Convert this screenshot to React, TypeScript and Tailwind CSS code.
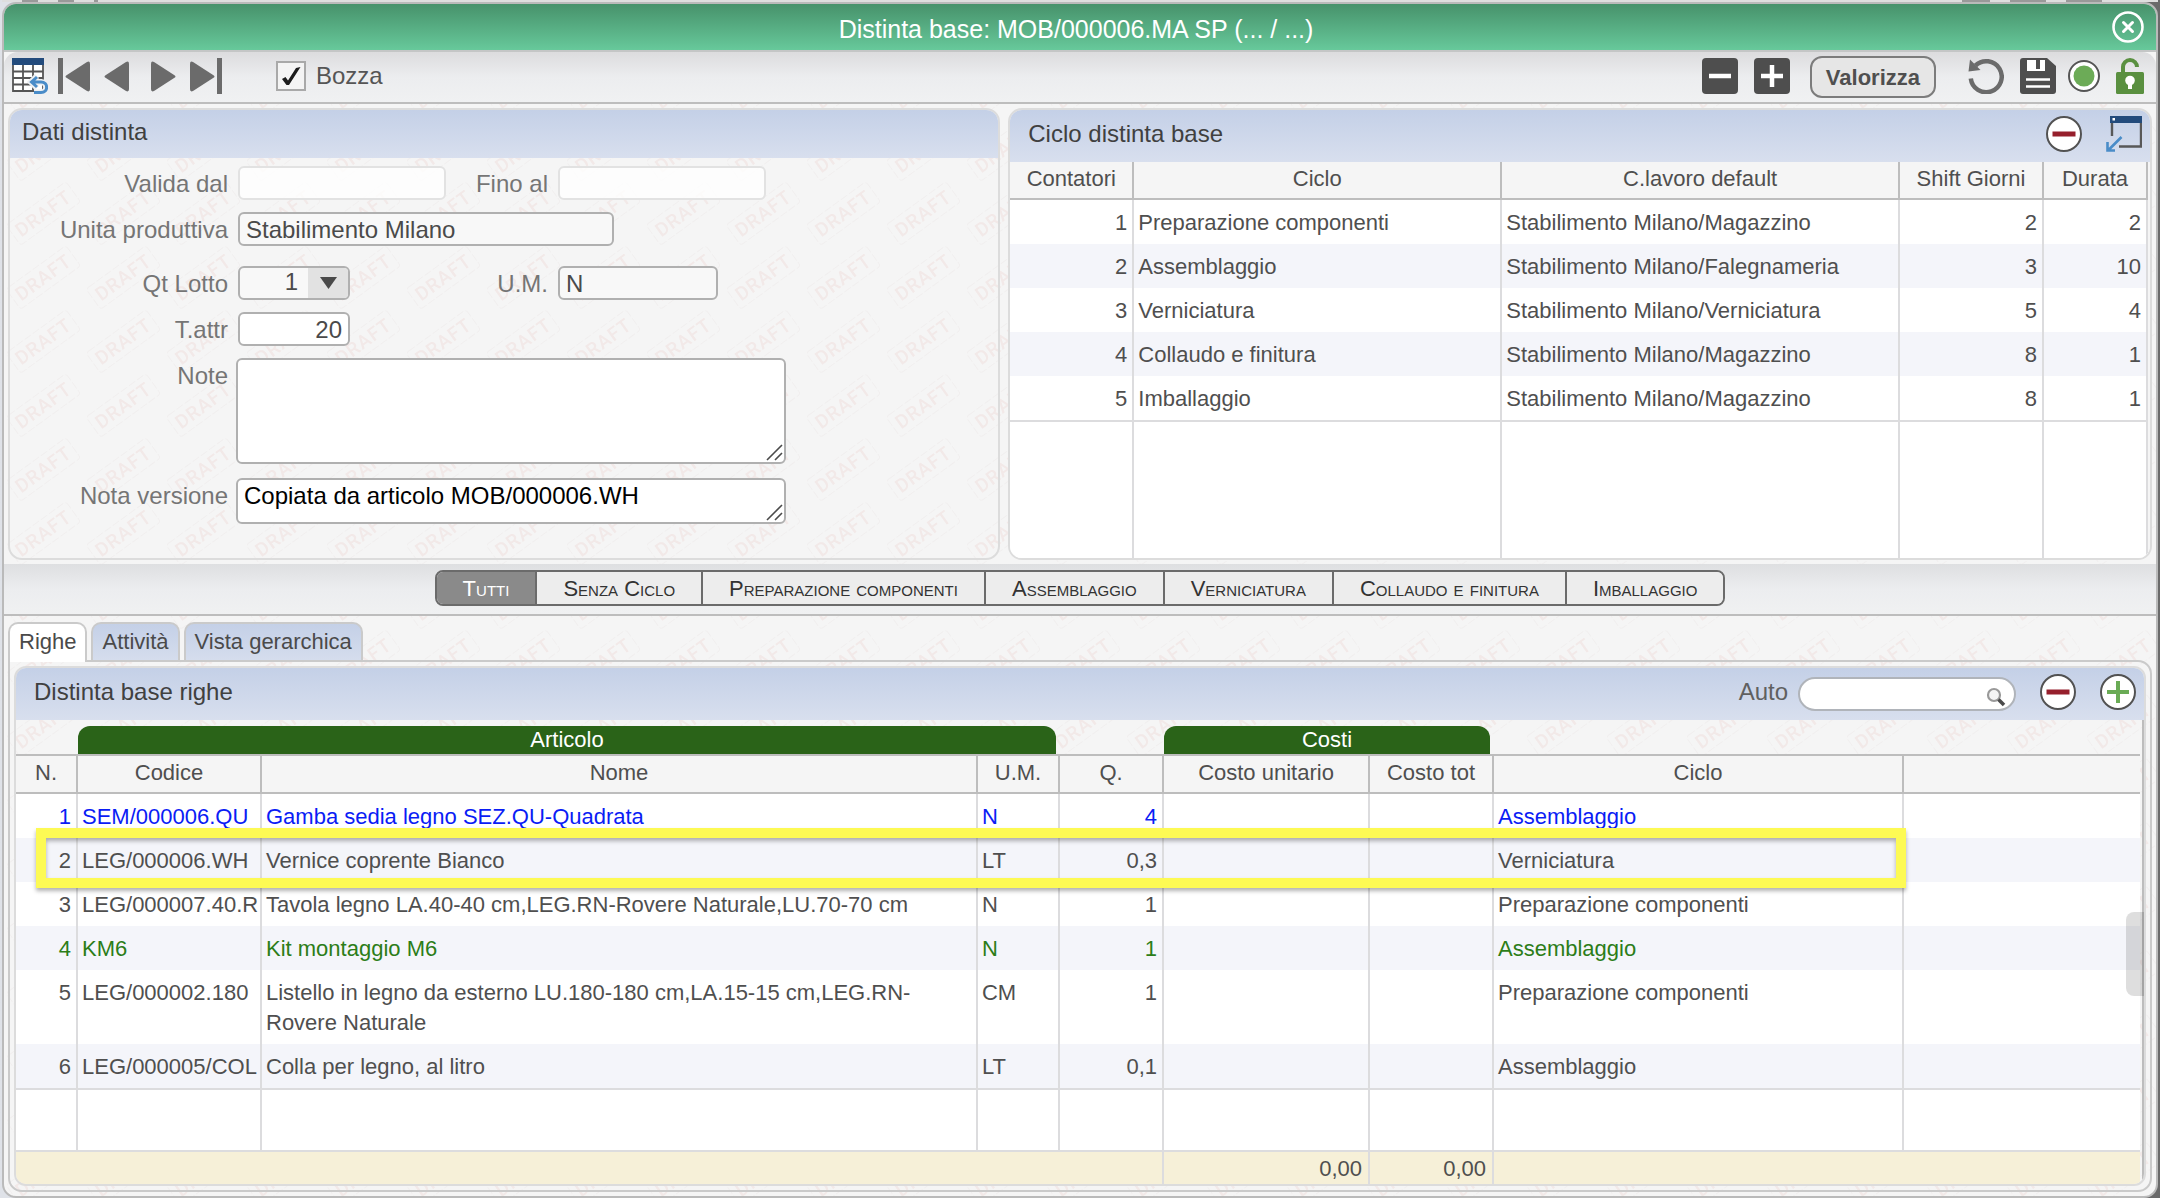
import React, { useState } from "react";

type Tone = "blue" | "green" | "plain";

const toneClass: Record<Tone, string> = {
  blue: "text-[#0a1cf5]",
  green: "text-[#2c7d18]",
  plain: "text-[#4f4f4f]",
};

const cicli = [
  { n: 1, ciclo: "Preparazione componenti", lavoro: "Stabilimento Milano/Magazzino", shift: 2, durata: 2 },
  { n: 2, ciclo: "Assemblaggio", lavoro: "Stabilimento Milano/Falegnameria", shift: 3, durata: 10 },
  { n: 3, ciclo: "Verniciatura", lavoro: "Stabilimento Milano/Verniciatura", shift: 5, durata: 4 },
  { n: 4, ciclo: "Collaudo e finitura", lavoro: "Stabilimento Milano/Magazzino", shift: 8, durata: 1 },
  { n: 5, ciclo: "Imballaggio", lavoro: "Stabilimento Milano/Magazzino", shift: 8, durata: 1 },
];

const righe: { n: number; codice: string; nome: string; um: string; q: string; ciclo: string; tone: Tone; marked?: boolean }[] = [
  { n: 1, codice: "SEM/000006.QU", nome: "Gamba sedia legno SEZ.QU-Quadrata", um: "N", q: "4", ciclo: "Assemblaggio", tone: "blue" },
  { n: 2, codice: "LEG/000006.WH", nome: "Vernice coprente Bianco", um: "LT", q: "0,3", ciclo: "Verniciatura", tone: "plain", marked: true },
  { n: 3, codice: "LEG/000007.40.R", nome: "Tavola legno LA.40-40 cm,LEG.RN-Rovere Naturale,LU.70-70 cm", um: "N", q: "1", ciclo: "Preparazione componenti", tone: "plain" },
  { n: 4, codice: "KM6", nome: "Kit montaggio M6", um: "N", q: "1", ciclo: "Assemblaggio", tone: "green" },
  { n: 5, codice: "LEG/000002.180", nome: "Listello in legno da esterno LU.180-180 cm,LA.15-15 cm,LEG.RN-Rovere Naturale", um: "CM", q: "1", ciclo: "Preparazione componenti", tone: "plain" },
  { n: 6, codice: "LEG/000005/COL", nome: "Colla per legno, al litro", um: "LT", q: "0,1", ciclo: "Assemblaggio", tone: "plain" },
];

const filtri = ["Tutti", "Senza Ciclo", "Preparazione componenti", "Assemblaggio", "Verniciatura", "Collaudo e finitura", "Imballaggio"];
const schede = ["Righe", "Attività", "Vista gerarchica"];

function DraftPattern() {
  return (
    <svg className="pointer-events-none absolute inset-0 h-full w-full" aria-hidden="true">
      <defs>
        <pattern id="draft" x="-1" y="49" width="80" height="64" patternUnits="userSpaceOnUse">
          <g transform="rotate(-36 40 32)">
            <rect x="3" y="20" width="74" height="25" rx="3" fill="none" stroke="#f1efef" strokeWidth="1" strokeDasharray="8 2" />
            <text x="40" y="39" textAnchor="middle" fontFamily="Roboto, sans-serif" fontWeight="500" fontSize="19" letterSpacing="1" fill="#f2e9e8">DRAFT</text>
          </g>
        </pattern>
      </defs>
      <rect width="100%" height="100%" fill="url(#draft)" />
    </svg>
  );
}

function IconButton({ label, className = "", children }: { label: string; className?: string; children: React.ReactNode }) {
  return (
    <button type="button" aria-label={label} className={"block shrink-0 " + className}>
      {children}
    </button>
  );
}

function GridIcon() {
  return (
    <svg width="36" height="36" viewBox="0 0 36 36">
      <rect x="1" y="2" width="30" height="31" fill="#fff" />
      <path d="M1 6V33H31V6M1 13.5H31M1 20H31M1 26.500H20M11 6V33M21 6V33" fill="none" stroke="#555" strokeWidth="1.800" />
      <rect x="0" y="0" width="32" height="7" fill="#234b7c" />
      <path d="M25 18L19 24L25 30M20 24H29C36 24 36 34.500 29 34.500H22" fill="none" stroke="#eef0f2" strokeWidth="6" />
      <path d="M25 19L19.500 24L25 29M20 24H29C36.500 24 36.500 34.500 29 34.500H22" fill="none" stroke="#4a8cc8" strokeWidth="3" />
    </svg>
  );
}

function PrevTriangle() {
  return <path d="M1.500 14.200L22 1Q25 -0.500 25 3V28Q25 31.500 22 30L1.500 16.800Q-0.500 15.500 1.500 14.200Z" fill="#6b6b6b" />;
}

function MinusCircle() {
  return (
    <svg width="36" height="36" viewBox="0 0 36 36">
      <circle cx="18" cy="18" r="17" fill="#fff" stroke="#525252" strokeWidth="2" />
      <rect x="6.500" y="15.500" width="23" height="5" fill="#961f2c" />
    </svg>
  );
}

function PlusCircle() {
  return (
    <svg width="36" height="36" viewBox="0 0 36 36">
      <circle cx="18" cy="18" r="17" fill="#fff" stroke="#525252" strokeWidth="2" />
      <path d="M18 7V29M7 18H29" stroke="#6aab55" strokeWidth="4" />
    </svg>
  );
}

function PanelHeader({ title, tall, children }: { title: string; tall?: boolean; children?: React.ReactNode }) {
  return (
    <div className={"flex items-center " + (tall ? "h-13" : "h-12")}>
      <h2 className="flex-1 pb-1 text-[24px] leading-[34px] text-[#404040]">{title}</h2>
      {children}
    </div>
  );
}

function Label({ htmlFor, wide, children }: { htmlFor: string; wide?: string; children: React.ReactNode }) {
  return (
    <label htmlFor={htmlFor} className={"h-[34px] shrink-0 pt-px text-right leading-[34px] text-[#757575] " + (wide ?? "w-[218px]")}>
      {children}
    </label>
  );
}

function Grip() {
  return (
    <svg width="18" height="18" viewBox="0 0 18 18" className="pointer-events-none absolute right-0.5 bottom-0.5">
      <path d="M1 16L16 1M9 16L16 9" stroke="#4a4a4a" strokeWidth="1.600" />
    </svg>
  );
}

const field = "block h-[34px] w-full rounded-md border-2 px-1.5 pt-px outline-none";

function DatiDistinta() {
  return (
    <section className="min-w-0 flex-[992] overflow-hidden rounded-[14px] border-2 border-[#dcdcdc]">
      <div className="bg-linear-to-b from-[#c4d0e7] to-[#d8dfee] pl-3">
        <PanelHeader title="Dati distinta" />
      </div>
      <form className="flex flex-col gap-3 pt-2 pb-[34px] text-[24px] text-[#4a4a4a]">
        <div className="flex gap-2.5">
          <Label htmlFor="valida">Valida dal</Label>
          <div className="w-[208px]"><input id="valida" className={field + " border-[#e2e2e2] bg-white/80"} /></div>
          <Label htmlFor="fino" wide="w-[92px]">Fino al</Label>
          <div className="w-[208px]"><input id="fino" className={field + " border-[#e2e2e2] bg-white/80"} /></div>
        </div>
        <div className="flex gap-2.5 pb-2">
          <Label htmlFor="unita">Unita produttiva</Label>
          <div className="w-[376px]"><input id="unita" readOnly defaultValue="Stabilimento Milano" className={field + " border-[#b0b0b0] bg-[#f8f8f8]"} /></div>
        </div>
        <div className="flex gap-2.5">
          <Label htmlFor="lotto">Qt Lotto</Label>
          <div className="relative w-28">
            <select id="lotto" className="block h-[34px] w-full appearance-none rounded-md border-2 border-[#b0b0b0] bg-[#f8f8f8] pr-[50px] pb-0.5 leading-[28px] outline-none [text-align-last:right]">
              <option>1</option>
            </select>
            <span className="pointer-events-none absolute top-0.5 right-0.5 bottom-0.5 flex w-10 items-center justify-center rounded-r bg-[#e2e2e2]">
              <svg width="17" height="12" viewBox="0 0 17 12"><path d="M0 0H17L8.500 12Z" fill="#4a4a4a" /></svg>
            </span>
          </div>
          <Label htmlFor="um" wide="w-[188px]">U.M.</Label>
          <div className="w-40"><input id="um" readOnly defaultValue="N" className={field + " border-[#b0b0b0] bg-[#f8f8f8]"} /></div>
        </div>
        <div className="flex gap-2.5">
          <Label htmlFor="tattr">T.attr</Label>
          <div className="w-28"><input id="tattr" defaultValue="20" className={field + " border-[#b0b0b0] bg-white text-right"} /></div>
        </div>
        <div className="flex gap-2">
          <Label htmlFor="note">Note</Label>
          <div className="relative w-[550px]">
            <textarea id="note" className="block h-[106px] w-full resize-none rounded-md border-2 border-[#b0b0b0] bg-white px-1.5 outline-none" />
            <Grip />
          </div>
        </div>
        <div className="flex gap-2 pt-0.5">
          <Label htmlFor="nota">Nota versione</Label>
          <div className="relative w-[550px]">
            <textarea id="nota" defaultValue="Copiata da articolo MOB/000006.WH" className="block h-[46px] w-full resize-none overflow-hidden rounded-md border-2 border-[#b0b0b0] bg-white px-1.5 leading-[32px] text-black outline-none" />
            <Grip />
          </div>
        </div>
      </form>
    </section>
  );
}

const th = "border-[#bdbdbd] border-b-2 bg-[#f5f5f5] px-1 pt-0.5 pb-1 text-center font-normal text-[#4f4f4f]";
const td = "border-[#dcdcde] pt-2 pb-1.5 align-top";
const left = " px-1";
const right = " pr-[5px] pl-1 text-right";

function CicloDistinta() {
  return (
    <section className="flex min-w-0 flex-[1144] flex-col overflow-hidden rounded-[14px] border-2 border-[#dcdcdc]">
      <div className="bg-linear-to-b from-[#c4d0e7] to-[#d8dfee] pr-2 pl-[18px]">
        <PanelHeader title="Ciclo distinta base" tall>
          <div className="flex gap-6 pb-1">
            <IconButton label="Rimuovi ciclo"><MinusCircle /></IconButton>
            <IconButton label="Apri in finestra">
              <svg width="36" height="36" viewBox="0 0 36 36">
                <path d="M6 5V20M35 5V30.500H13" fill="none" stroke="#585858" strokeWidth="2.400" />
                <rect x="4" y="0" width="32" height="7" fill="#234b7c" />
                <rect x="6.500" y="2" width="2.500" height="2.500" fill="#fff" />
                <path d="M15.500 21L2 34.500M1.500 26V34.500H9" fill="none" stroke="#4a8cc8" strokeWidth="2.600" />
              </svg>
            </IconButton>
          </div>
        </PanelHeader>
      </div>
      <div className="flex flex-1 bg-[#f5f5f5] pr-0.5">
        <table className="h-full w-full table-fixed border-separate border-spacing-0 text-[22px] leading-[30px] text-[#4f4f4f]">
          <colgroup>
            <col className="w-[124px]" /><col className="w-[368px]" /><col /><col className="w-36" /><col className="w-26" />
          </colgroup>
          <thead>
            <tr>
              {["Contatori", "Ciclo", "C.lavoro default", "Shift Giorni", "Durata"].map((h) => (
                <th key={h} scope="col" className={th + " border-r-2"}>{h}</th>
              ))}
            </tr>
          </thead>
          <tbody>
            {cicli.map((r) => {
              const edge = r.n === cicli.length ? " border-b-2" : "";
              return (
                <tr key={r.n} className="bg-white even:bg-[#f4f5fa]">
                  <td className={td + right + " border-r-2" + edge}>{r.n}</td>
                  <td className={td + left + " border-r-2" + edge}>{r.ciclo}</td>
                  <td className={td + left + " border-r-2" + edge}>{r.lavoro}</td>
                  <td className={td + right + " border-r-2" + edge}>{r.shift}</td>
                  <td className={td + right + " border-r-2" + edge}>{r.durata}</td>
                </tr>
              );
            })}
            <tr className="h-full bg-white">
              {[0, 1, 2, 3, 4].map((i) => <td key={i} className="border-r-2 border-[#dcdcde]" />)}
            </tr>
          </tbody>
        </table>
      </div>
    </section>
  );
}

function Toolbar() {
  const [bozza, setBozza] = useState(true);
  return (
    <div className="flex h-13 items-center rounded-t-[14px] border-b-2 border-[#bdbdbd] bg-linear-to-b from-[#dcdcde] via-[#ecedef] to-[#f0f1f2] pr-3 pb-0.5 pl-2 text-[24px]">
      <IconButton label="Torna alla lista"><GridIcon /></IconButton>
      <IconButton label="Primo" className="ml-2.5">
        <svg width="32" height="36" viewBox="0 0 32 36"><rect width="5" height="36" fill="#6b6b6b" /><g transform="translate(7 3)"><PrevTriangle /></g></svg>
      </IconButton>
      <IconButton label="Precedente" className="ml-3.5">
        <svg width="26" height="36" viewBox="0 0 26 36"><g transform="translate(0 3)"><PrevTriangle /></g></svg>
      </IconButton>
      <IconButton label="Successivo" className="ml-5">
        <svg width="26" height="36" viewBox="0 0 26 36"><g transform="translate(26 3) scale(-1 1)"><PrevTriangle /></g></svg>
      </IconButton>
      <IconButton label="Ultimo" className="ml-3.5">
        <svg width="32" height="36" viewBox="0 0 32 36"><rect x="27" width="5" height="36" fill="#6b6b6b" /><g transform="translate(25 3) scale(-1 1)"><PrevTriangle /></g></svg>
      </IconButton>
      <label className="ml-[54px] flex items-center gap-2.5 text-[#555]">
        <span className="relative block">
          <input type="checkbox" checked={bozza} onChange={() => setBozza(!bozza)} className="block h-[30px] w-[30px] appearance-none border-2 border-[#a9a9a9] bg-[#f4f4f4]" />
          {bozza && (
            <svg width="30" height="30" viewBox="0 0 30 30" className="pointer-events-none absolute inset-0">
              <path d="M6 18L9.500 16L12 19.500L20 7L24.500 6L13 24L10.500 24Z" fill="#1c1c1c" />
            </svg>
          )}
        </span>
        <span>Bozza</span>
      </label>
      <div className="ml-auto flex items-center">
        <IconButton label="Comprimi">
          <svg width="36" height="36" viewBox="0 0 36 36"><rect width="36" height="36" rx="4" fill="#4e4e4e" /><path d="M7 18H29" stroke="#fff" strokeWidth="4.500" /></svg>
        </IconButton>
        <IconButton label="Espandi" className="ml-4">
          <svg width="36" height="36" viewBox="0 0 36 36"><rect width="36" height="36" rx="4" fill="#4e4e4e" /><path d="M7 18H29M18 7V29" stroke="#fff" strokeWidth="4.500" /></svg>
        </IconButton>
        <button type="button" className="mt-0.5 ml-5 h-[42px] rounded-xl border-2 border-[#7c7c7c] bg-[#e6e6e6] px-3.5 pt-0.5 text-[22px] leading-[36px] font-bold text-[#4f4f4f]">Valorizza</button>
        <IconButton label="Annulla" className="ml-8">
          <svg width="36" height="36" viewBox="0 0 36 36">
            <path d="M7.500 7.500A15.500 15.500 0 1 1 2.800 20.500" fill="none" stroke="#6b6b6b" strokeWidth="4.500" />
            <path d="M2 1.500L0.500 13.500L12.500 12Z" fill="#6b6b6b" />
          </svg>
        </IconButton>
        <IconButton label="Salva" className="ml-4">
          <svg width="36" height="36" viewBox="0 0 36 36">
            <path d="M3 0H27L36 8V33Q36 36 33 36H3Q0 36 0 33V3Q0 0 3 0Z" fill="#4e4e4e" />
            <path d="M7 2H25V13H7ZM16 2V11H20V2Z" fill="#fff" fillRule="evenodd" />
            <path d="M6 21.500H30M6 28.500H30" stroke="#fff" strokeWidth="2.500" />
          </svg>
        </IconButton>
        <IconButton label="Stato" className="ml-3">
          <svg width="32" height="32" viewBox="0 0 32 32"><circle cx="16" cy="16" r="15" fill="#fff" stroke="#555" strokeWidth="2" /><circle cx="16" cy="16" r="10.500" fill="#6cab57" /></svg>
        </IconButton>
        <IconButton label="Sblocca" className="ml-4">
          <svg width="28" height="36" viewBox="0 0 28 36">
            <path d="M7 15V9A7 7 0 0 1 21 9" fill="none" stroke="#5a9040" strokeWidth="4" />
            <rect y="14" width="28" height="22" rx="1.500" fill="#5a9040" />
            <circle cx="14" cy="22.500" r="4.800" fill="#fff" /><path d="M12 24H16V31H12Z" fill="#fff" />
          </svg>
        </IconButton>
      </div>
    </div>
  );
}

function RigheTable() {
  return (
    <div className="relative border-r-2 border-[#bdbdbd] pr-0.5">
      <table className="w-full table-fixed border-separate border-spacing-0 text-[22px] leading-[30px] text-[#4f4f4f]">
        <colgroup>
          <col className="w-[62px]" /><col className="w-[184px]" /><col /><col className="w-[82px]" /><col className="w-[104px]" />
          <col className="w-[206px]" /><col className="w-[124px]" /><col className="w-[410px]" /><col className="w-[236px]" />
        </colgroup>
        <thead>
          <tr>
            <td className="border-b-2 border-[#bdbdbd]" />
            <th colSpan={3} scope="colgroup" className="border-b-2 border-[#bdbdbd] pt-1.5 pr-1 font-normal text-white">
              <div className="rounded-t-xl bg-[#2a6318] leading-7">Articolo</div>
            </th>
            <td className="border-b-2 border-[#bdbdbd]" />
            <th colSpan={2} scope="colgroup" className="border-b-2 border-[#bdbdbd] pt-1.5 pr-1 font-normal text-white">
              <div className="rounded-t-xl bg-[#2a6318] leading-7">Costi</div>
            </th>
            <td className="border-b-2 border-[#bdbdbd]" />
            <td className="border-b-2 border-[#bdbdbd]" />
          </tr>
          <tr>
            {["N.", "Codice", "Nome", "U.M.", "Q.", "Costo unitario", "Costo tot", "Ciclo"].map((h) => (
              <th key={h} scope="col" className={th + " border-r-2"}>{h}</th>
            ))}
            <td className={th} />
          </tr>
        </thead>
        <tbody>
          {righe.map((r) => {
            const edge = r.n === righe.length ? " border-b-2" : "";
            return (
              <tr key={r.n} className={"relative bg-white even:bg-[#f4f5fa] " + toneClass[r.tone]}>
                <td className={td + right + " border-r-2" + edge}>
                  {r.n}
                  {r.marked && (
                    <span className="pointer-events-none absolute -top-2.5 right-[234px] -bottom-1.5 left-5 z-10 border-10 border-[#fdfa54] shadow-[0_3px_4px_rgba(0,0,0,0.3),inset_0_3px_4px_rgba(0,0,0,0.3)]" />
                  )}
                </td>
                <td className={td + left + " overflow-hidden border-r-2 text-clip whitespace-nowrap" + edge}>{r.codice}</td>
                <td className={td + " border-r-2 pr-12 pl-1" + edge}>{r.nome}</td>
                <td className={td + left + " border-r-2" + edge}>{r.um}</td>
                <td className={td + right + " border-r-2" + edge}>{r.q}</td>
                <td className={td + " border-r-2" + edge} />
                <td className={td + " border-r-2" + edge} />
                <td className={td + left + " border-r-2" + edge}>{r.ciclo}</td>
                <td className={td + edge} />
              </tr>
            );
          })}
          <tr className="h-[62px] bg-white">
            {[0, 1, 2, 3, 4, 5, 6, 7].map((i) => <td key={i} className="border-r-2 border-b-2 border-[#dcdcde]" />)}
            <td className="border-b-2 border-[#dcdcde]" />
          </tr>
        </tbody>
        <tfoot>
          <tr className="bg-[#f6f0d8] text-right">
            <td colSpan={5} className="border-r-2 border-[#dcdcde]" />
            <td className="border-r-2 border-[#dcdcde] px-1.5 pt-0.5">0,00</td>
            <td className="border-r-2 border-[#dcdcde] px-1.5 pt-0.5">0,00</td>
            <td colSpan={2} />
          </tr>
        </tfoot>
      </table>
      <div className="absolute top-48 -right-0.5 h-21 w-[18px] rounded-l-lg bg-black/13" />
    </div>
  );
}

export default function App() {
  const [filtro, setFiltro] = useState("Tutti");
  const [scheda, setScheda] = useState("Righe");
  return (
    <div className="min-h-screen bg-linear-to-r from-[#dfe2e8] from-50% to-[#6a6a6a] px-0.5 font-['Liberation_Sans',Arial,sans-serif]">
      <div className="flex h-0.5 justify-between bg-[#dedede] px-5">
        <div className="flex gap-5"><span className="w-4 bg-[#999]" /><span className="w-4 bg-[#999]" /><span className="w-1 bg-[#999]" /></div>
        <div className="flex gap-5 pr-9"><span className="w-7 bg-[#999]" /><span className="w-9 bg-[#999]" /><span className="w-9 bg-[#999]" /></div>
      </div>
      <main className="relative overflow-hidden rounded-[14px] border-2 border-[#bababa] bg-[#f5f5f5]">
        <DraftPattern />
        <div className="relative">
          <header className="flex h-12 items-center border-b-2 border-[#c4c6c6] bg-linear-to-b from-[#47926b] to-[#67c99b] pr-3 pl-9">
            <h1 className="flex-1 pt-1 text-center text-[25px] leading-[34px] text-white">Distinta base: MOB/000006.MA SP (... / ...)</h1>
            <IconButton label="Chiudi">
              <svg width="32" height="32" viewBox="0 0 32 32">
                <circle cx="16" cy="16" r="14.500" fill="none" stroke="#fff" strokeWidth="2.600" />
                <path d="M11.500 11.500L20.500 20.500M20.500 11.500L11.500 20.500" stroke="#fff" strokeWidth="3" strokeLinecap="round" />
              </svg>
            </IconButton>
          </header>
          <Toolbar />
          <div className="flex gap-2 p-1">
            <DatiDistinta />
            <CicloDistinta />
          </div>
          <nav aria-label="Filtro ciclo" className="flex h-13 justify-center border-b-2 border-[#bdbdbd] bg-linear-to-b from-[#dedfe1] via-[#ecedef] to-[#f0f1f2] pt-1.5">
            <div className="flex h-9 divide-x-2 divide-[#6b6b6b] overflow-hidden rounded-lg border-2 border-[#6b6b6b]">
              {filtri.map((f) => (
                <button
                  key={f}
                  type="button"
                  aria-pressed={f === filtro}
                  onClick={() => setFiltro(f)}
                  className={"px-[26px] pt-px text-[22px] leading-[32px] whitespace-nowrap [font-variant:small-caps] " + (f === filtro ? "bg-[#8a8a8a] text-white" : "bg-[#ededed] text-[#333]")}
                >
                  {f}
                </button>
              ))}
            </div>
          </nav>
          <div className="px-1 pt-1.5 pb-1">
            <div role="tablist" className="flex gap-1">
              {schede.map((s) => (
                <button
                  key={s}
                  type="button"
                  role="tab"
                  aria-selected={s === scheda}
                  onClick={() => setScheda(s)}
                  className={
                    "rounded-t-[10px] border-2 border-b-0 border-[#cacaca] px-[9px] text-[22px] leading-[36px] text-[#4a4a4a] " +
                    (s === scheda ? "z-10 -mb-0.5 h-10 bg-white pb-0.5" : "h-[38px] bg-linear-to-b from-[#c4d0e7] to-[#d5dded]")
                  }
                >
                  {s}
                </button>
              ))}
            </div>
            <div className="rounded-[14px] rounded-tl-none border-2 border-[#cacaca] p-1">
              <section className="overflow-hidden rounded-[12px] border-2 border-[#dcdcdc]">
                <div className="bg-linear-to-b from-[#c4d0e7] to-[#d8dfee] pr-2 pl-[18px]">
                  <PanelHeader title="Distinta base righe" tall>
                    <label htmlFor="cerca" className="pb-1 text-[24px] text-[#606060]">Auto</label>
                    <div className="relative mr-6 ml-2.5 w-[218px]">
                      <input id="cerca" type="text" className="block h-[34px] w-full rounded-full border-2 border-[#b0b4ba] bg-white pr-10 pl-4 text-[22px] outline-none" />
                      <svg width="20" height="20" viewBox="0 0 20 20" className="pointer-events-none absolute top-2.5 right-2.5">
                        <circle cx="8" cy="8" r="6" fill="#f4f4f4" stroke="#999" strokeWidth="2.200" />
                        <path d="M12.500 12.500L18 18" stroke="#4a4a4a" strokeWidth="3.500" />
                      </svg>
                    </div>
                    <div className="flex gap-6 pb-1">
                      <IconButton label="Rimuovi riga"><MinusCircle /></IconButton>
                      <IconButton label="Aggiungi riga"><PlusCircle /></IconButton>
                    </div>
                  </PanelHeader>
                </div>
                <RigheTable />
              </section>
            </div>
          </div>
        </div>
      </main>
    </div>
  );
}
